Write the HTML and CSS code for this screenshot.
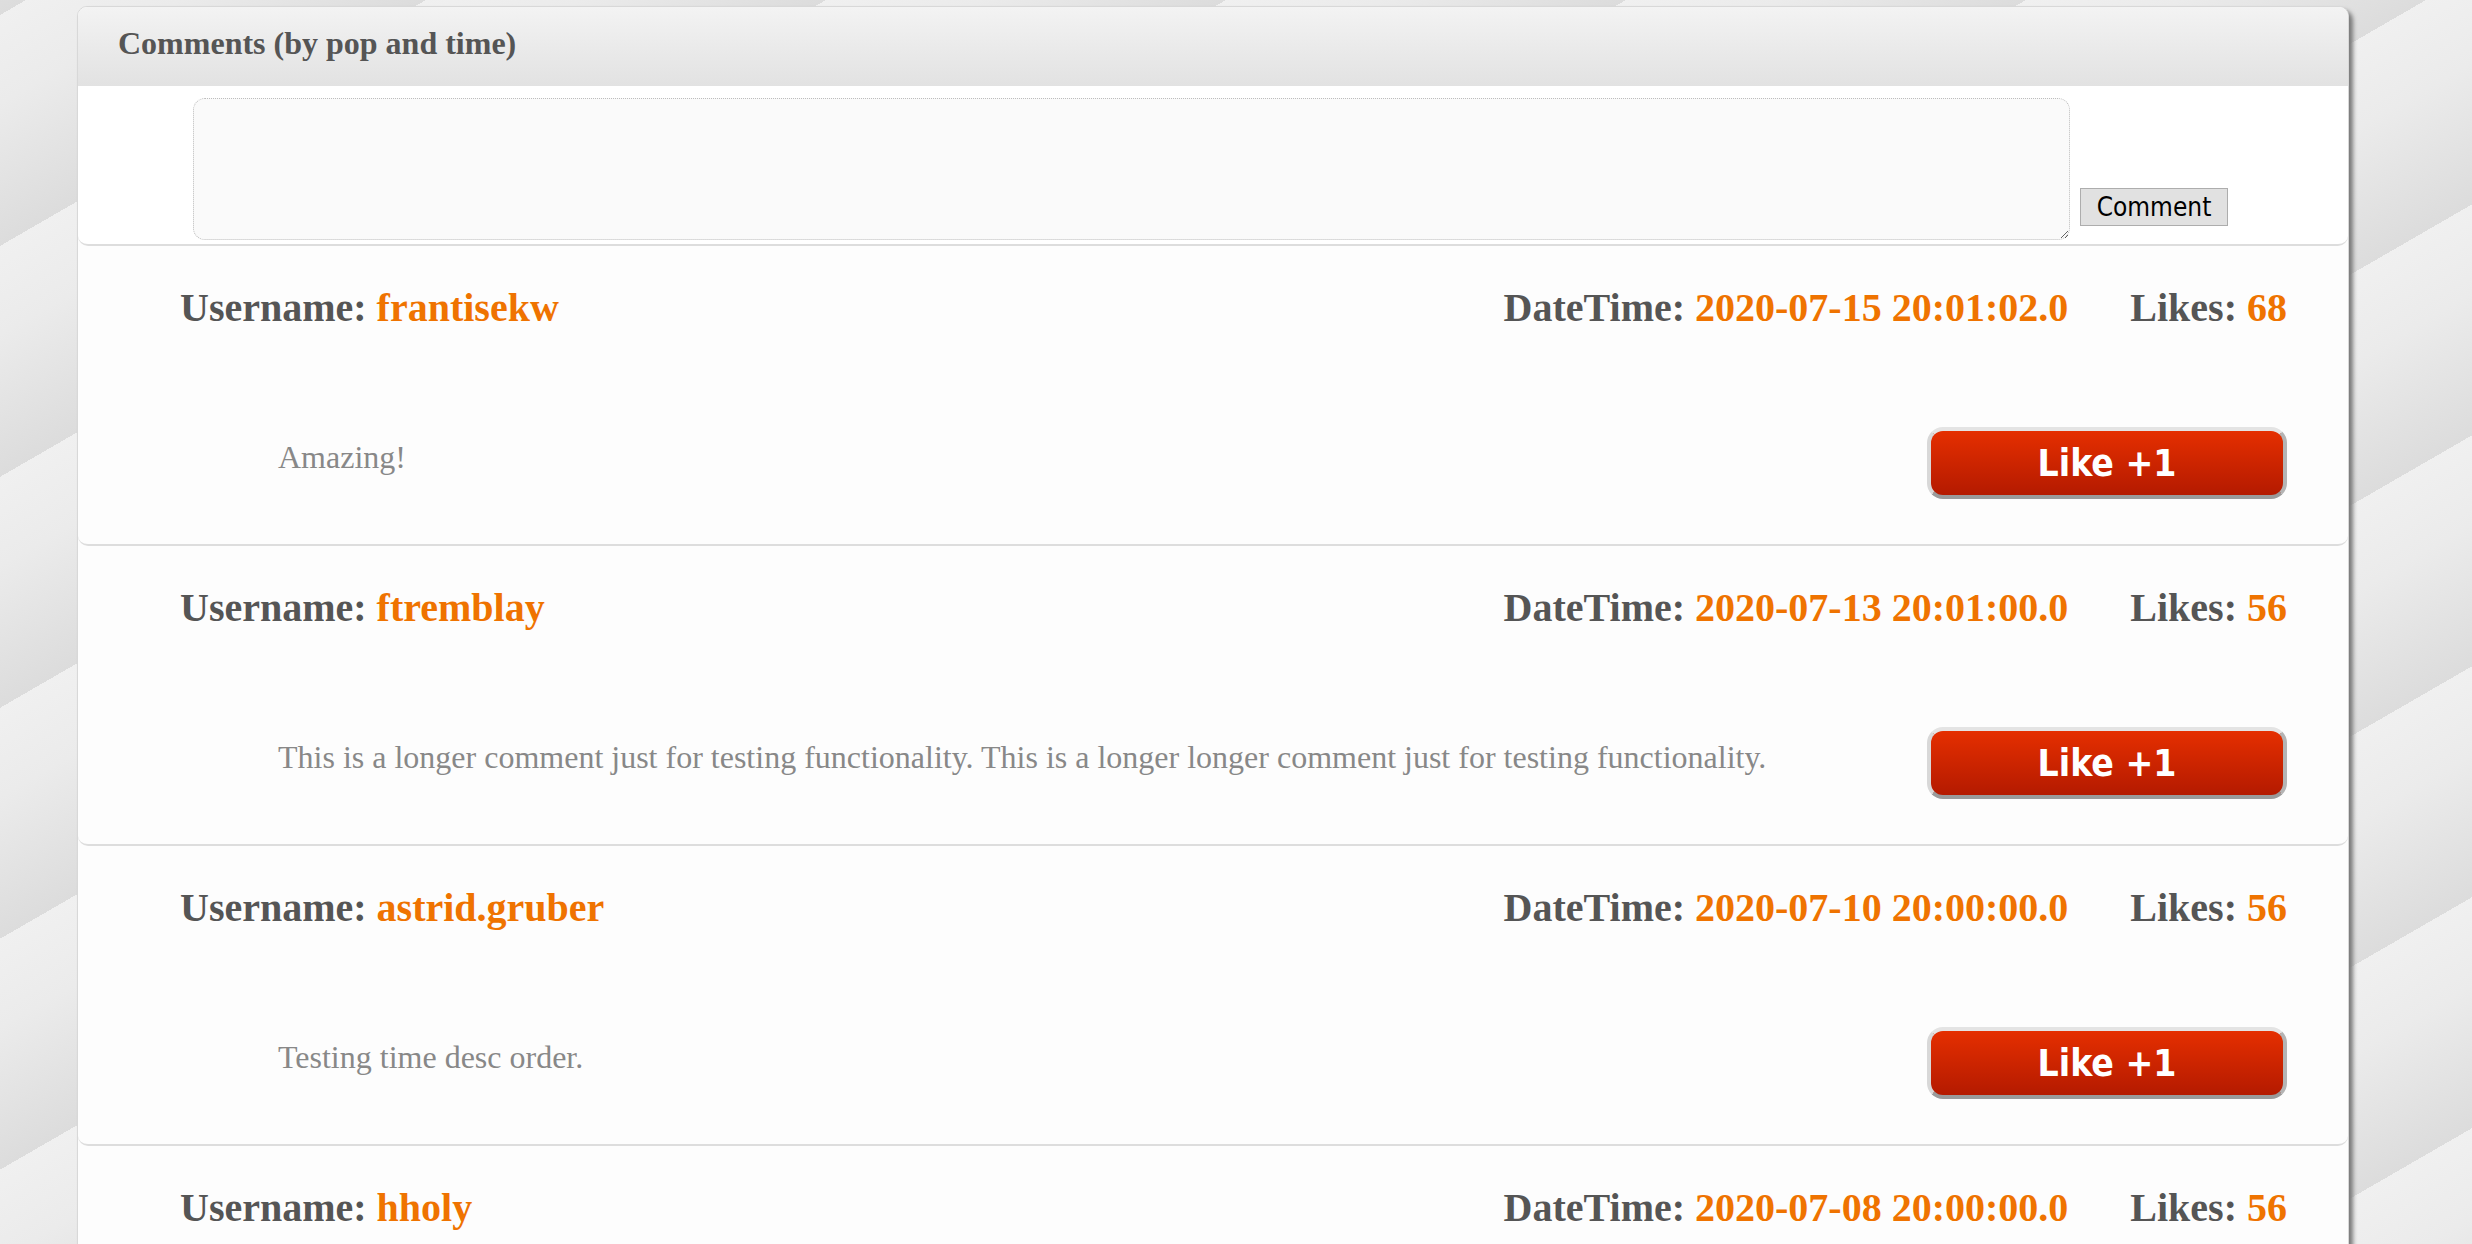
FILE: index.html
```html
<!DOCTYPE html>
<html lang="en">
<head>
<meta charset="utf-8">
<title>Comments</title>
<link rel="stylesheet" href="styles.css">
</head>
<body>
<div class="panel">
  <div class="panel-head">Comments (by pop and time)</div>
  <form class="compose">
    <textarea class="compose-input"></textarea>
    <button class="compose-btn" type="button">Comment</button>
  </form>

  <div class="comment">
    <div class="comment-meta">
      <div class="meta-item">Username: <span class="val">frantisekw</span></div>
      <div class="meta-right">
        <div class="meta-item">DateTime: <span class="val">2020-07-15 20:01:02.0</span></div>
        <div class="meta-item">Likes: <span class="val">68</span></div>
      </div>
    </div>
    <div class="comment-body">
      <p class="comment-text">Amazing!</p>
      <button class="like-btn" type="button">Like +1</button>
    </div>
  </div>

  <div class="comment">
    <div class="comment-meta">
      <div class="meta-item">Username: <span class="val">ftremblay</span></div>
      <div class="meta-right">
        <div class="meta-item">DateTime: <span class="val">2020-07-13 20:01:00.0</span></div>
        <div class="meta-item">Likes: <span class="val">56</span></div>
      </div>
    </div>
    <div class="comment-body">
      <p class="comment-text">This is a longer comment just for testing functionality. This is a longer longer comment just for testing functionality.</p>
      <button class="like-btn" type="button">Like +1</button>
    </div>
  </div>

  <div class="comment">
    <div class="comment-meta">
      <div class="meta-item">Username: <span class="val">astrid.gruber</span></div>
      <div class="meta-right">
        <div class="meta-item">DateTime: <span class="val">2020-07-10 20:00:00.0</span></div>
        <div class="meta-item">Likes: <span class="val">56</span></div>
      </div>
    </div>
    <div class="comment-body">
      <p class="comment-text">Testing time desc order.</p>
      <button class="like-btn" type="button">Like +1</button>
    </div>
  </div>

  <div class="comment">
    <div class="comment-meta">
      <div class="meta-item">Username: <span class="val">hholy</span></div>
      <div class="meta-right">
        <div class="meta-item">DateTime: <span class="val">2020-07-08 20:00:00.0</span></div>
        <div class="meta-item">Likes: <span class="val">56</span></div>
      </div>
    </div>
  </div>
</div>
</body>
</html>
```

FILE: styles.css
```css
html {
  height: 100%;
  overflow: hidden;
  background: repeating-linear-gradient(150deg, #f0f0f0 13px, #ebebeb 90px, #dcdcdc 213px) fixed;
}

body {
  margin: 0;
  padding-top: 6px;
  font-family: "Liberation Serif", "Times New Roman", serif;
}

.panel {
  margin-left: 77px;
  width: 2272px;
  box-sizing: border-box;
  border: 1px solid #d8d8d8;
  border-radius: 10px 10px 0 0;
  background: #fdfdfd;
  box-shadow: 4px 4px 4px #7a7a7a;
}

.panel-head {
  height: 79px;
  box-sizing: border-box;
  padding: 18px 0 0 40px;
  border-radius: 9px 9px 0 0;
  background: linear-gradient(#f3f3f3, #e2e2e2);
  font: bold 32px/37px "Liberation Serif", serif;
  color: #555;
}

.compose {
  display: flex;
  align-items: flex-end;
  gap: 10px;
  margin: 0;
  padding: 12px 0 4px 115px;
  background: #fff;
  border-bottom: 2px solid #dddddd;
  border-radius: 0 0 10px 10px;
}

.compose-input {
  width: 1877px;
  height: 142px;
  box-sizing: border-box;
  margin: 0;
  border: 1px dotted #bdbdbd;
  border-radius: 12px;
  background: #fafafa;
  resize: both;
}

.compose-btn {
  width: 148px;
  height: 38px;
  box-sizing: border-box;
  margin: 0 0 14px 0;
  padding: 0;
  border: 1px solid #adadad;
  background: #e1e1e1;
  color: #000;
  font: 26px/1 "DejaVu Sans Condensed", "DejaVu Sans", sans-serif;
  font-stretch: condensed;
}

.comment {
  padding: 39px 61px 45px 102px;
  border-bottom: 2px solid #dddddd;
  border-radius: 0 0 10px 10px;
  background: #fdfdfd;
}

.comment-meta {
  display: flex;
  justify-content: space-between;
  font: bold 40px/46px "Liberation Serif", serif;
  color: #555;
  white-space: nowrap;
}

.meta-right {
  display: flex;
  gap: 62px;
}

.val {
  color: #ef7300;
}

.comment-body {
  display: flex;
  justify-content: space-between;
  align-items: flex-start;
  margin-top: 96px;
}

.comment-text {
  margin: 12px 0 0 98px;
  font: 32px/37px "Liberation Serif", serif;
  color: #888;
}

.like-btn {
  width: 360px;
  height: 72px;
  box-sizing: border-box;
  margin: 0;
  padding: 0;
  flex-shrink: 0;
  border: 4px solid;
  border-color: #e4e4e4 #b4b4b4 #9a9a9a #d8d8d8;
  border-radius: 16px;
  background: linear-gradient(#e52f00, #b41a00);
  color: #fff;
  font: bold 37px/1 "DejaVu Sans Condensed", "DejaVu Sans", sans-serif;
  font-stretch: condensed;
}
```
